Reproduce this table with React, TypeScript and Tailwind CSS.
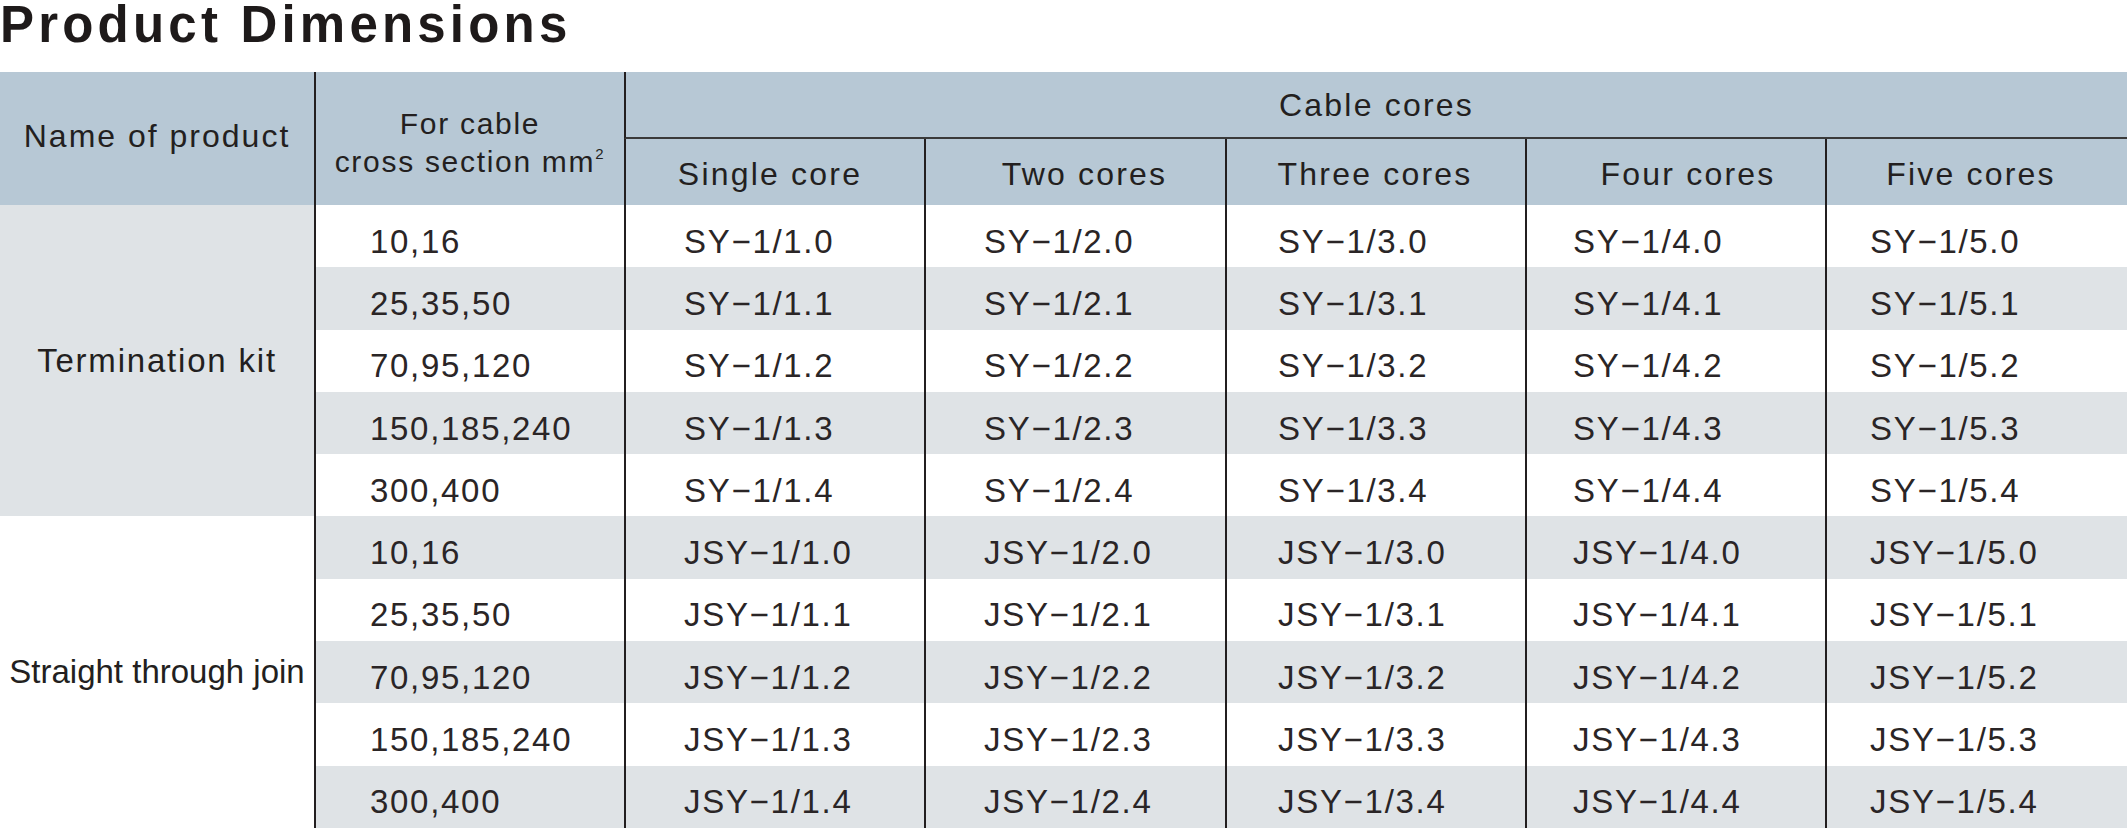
import React from "react";

const sizes = ["10,16", "25,35,50", "70,95,120", "150,185,240", "300,400"];
const pads = ["pl-[54px]", "pl-[58px]", "pl-[58px]", "pl-[51px]", "pl-[46px]", "pl-[43px]"];
const coreHeads = [
  { t: "Single core", c: "pr-[10px]" },
  { t: "Two cores", c: "pl-[18px]" },
  { t: "Three cores", c: "pr-[2px]" },
  { t: "Four cores", c: "pl-[24px]" },
  { t: "Five cores", c: "pr-[12px]" },
];

export default function App() {
  const rows: { prefix: string; size: string; idx: number }[] = [];
  ["SY", "JSY"].forEach((p) => sizes.forEach((s, i) => rows.push({ prefix: p, size: s, idx: i })));

  return (
    <div className="w-[2127px] h-[830px] bg-white text-[#231f20] font-['Liberation_Sans',Arial,sans-serif] overflow-hidden">
      <div className="h-[72px]">
        <h1 className="text-[51px] leading-[50px] font-bold tracking-[4.2px] text-[#1e1a1a]">Product Dimensions</h1>
      </div>
      <div className="grid grid-cols-[314px_310px_300px_301px_300px_300px_302px] grid-rows-[67px_66px_repeat(10,62.3px)]">
        <div className="row-span-2 col-start-1 row-start-1 bg-[#b7c8d5] flex items-center justify-center pb-[5px] text-[32px] tracking-[2px]">
          Name of product
        </div>
        <div className="row-span-2 col-start-2 row-start-1 bg-[#b7c8d5] border-l-2 border-[#231f20] flex flex-col items-center justify-center pt-[8px] text-[30px] leading-[38px] tracking-[1.7px]">
          <span>For cable</span>
          <span>
            cross section mm<sup className="text-[15px] relative -top-[13px]">2</sup>
          </span>
        </div>
        <div className="col-start-3 col-span-5 row-start-1 bg-[#b7c8d5] border-l-2 border-b-2 border-l-[#231f20] border-b-[#3a3a3a] flex items-center justify-center text-[32px] tracking-[2.2px]">
          Cable cores
        </div>
        {coreHeads.map((h, i) => (
          <div
            key={h.t}
            className={`row-start-2 bg-[#b7c8d5] border-l-2 border-[#231f20] flex items-center justify-center pt-[4px] text-[32px] tracking-[2.2px] ${h.c}`}
            style={{ gridColumnStart: i + 3 }}
          >
            {h.t}
          </div>
        ))}
        <div className="col-start-1 row-start-3 row-span-5 bg-[#dfe3e6] flex items-center justify-center text-[33px] tracking-[1.8px]">
          Termination kit
        </div>
        <div className="col-start-1 row-start-8 row-span-5 bg-white flex items-center justify-center text-[33px]">
          Straight through join
        </div>
        {rows.map((r, ri) => {
          const bg = ri % 2 === 0 ? "bg-white" : "bg-[#dfe3e6]";
          return (
            <React.Fragment key={ri}>
              <div
                className={`${bg} ${pads[0]} border-l-2 border-[#231f20] flex items-center pt-[10px] text-[33px] leading-none tracking-[1.7px] text-[#2a2526]`}
                style={{ gridColumnStart: 2, gridRowStart: ri + 3 }}
              >
                {r.size}
              </div>
              {[1, 2, 3, 4, 5].map((c) => (
                <div
                  key={c}
                  className={`${bg} ${pads[c]} border-l-2 border-[#231f20] flex items-center pt-[10px] text-[33px] leading-none tracking-[1.7px] text-[#2a2526]`}
                  style={{ gridColumnStart: c + 2, gridRowStart: ri + 3 }}
                >
                  {`${r.prefix}\u22121/${c}.${r.idx}`}
                </div>
              ))}
            </React.Fragment>
          );
        })}
      </div>
    </div>
  );
}
